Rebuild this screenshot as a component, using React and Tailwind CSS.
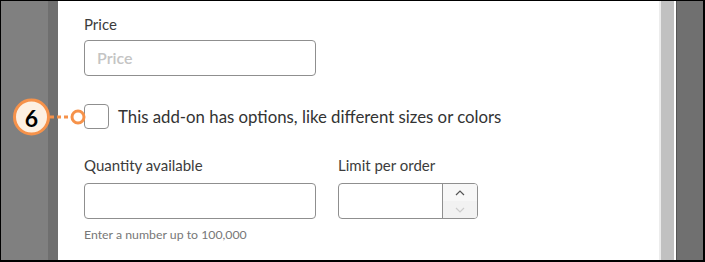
export default function App() {
  return (
    <div className="relative w-[705px] h-[262px] overflow-hidden border-t border-l border-b-2 border-r-2 border-black bg-white flex font-['Lato','Liberation_Sans',sans-serif] text-[#333]">
      <div className="w-[47px] shrink-0 bg-[#808080]" />
      <div className="w-[10px] shrink-0 bg-[#6f6f6f]" />

      <div className="flex-1 pl-[26px] pt-[14px]">
        <label className="block text-[15px] leading-[18px] text-[#3c3c3c]">Price</label>
        <div className="mt-[7px] w-[232px] h-[36px] rounded-[4px] border border-[#8f8f8f] flex items-center px-[12px] text-[16px] text-[#c4c4c4] font-semibold">
          Price
        </div>

        <div className="mt-[28px] flex items-center">
          <div className="w-[25px] h-[25px] rounded-[4px] border border-[#8f8f8f] bg-white" />
          <span className="ml-[9px] text-[16.8px] text-[#333]">This add-on has options, like different sizes or colors</span>
        </div>

        <div className="mt-[27px] flex gap-[22px]">
          <div>
            <label className="block text-[15px] leading-[18px] text-[#3c3c3c]">Quantity available</label>
            <div className="mt-[9px] w-[232px] h-[36px] rounded-[4px] border border-[#8f8f8f]" />
            <p className="mt-[7px] text-[12.3px] text-[#777]">Enter a number up to 100,000</p>
          </div>
          <div>
            <label className="block text-[15px] leading-[18px] text-[#3c3c3c]">Limit per order</label>
            <div className="mt-[9px] w-[140px] h-[36px] rounded-[4px] border border-[#8f8f8f] flex overflow-hidden">
              <div className="flex-1" />
              <div className="w-[35px] border-l border-[#8f8f8f] flex flex-col">
                <div className="flex-1 bg-[#f7f7f7] flex items-center justify-center">
                  <svg width="10" height="6" viewBox="0 0 10 6" fill="none">
                    <path d="M1 5l4-4 4 4" stroke="#555" strokeWidth="1.2" />
                  </svg>
                </div>
                <div className="flex-1 bg-[#f2f2f2] flex items-center justify-center">
                  <svg width="10" height="6" viewBox="0 0 10 6" fill="none">
                    <path d="M1 1l4 4 4-4" stroke="#ccc" strokeWidth="1.2" />
                  </svg>
                </div>
              </div>
            </div>
          </div>
        </div>
      </div>

      <div className="w-[2px] shrink-0 bg-[#ececec]" />
      <div className="w-[13px] shrink-0 bg-[#c1c1c1]" />
      <div className="w-[2px] shrink-0 bg-white" />
      <div className="w-[1px] shrink-0 bg-[#555]" />
      <div className="w-[26px] shrink-0 bg-[#707070]" />

      {/* annotation marker */}
      <svg className="absolute left-[10px] top-[97px]" width="80" height="38" viewBox="0 0 80 38" fill="none">
        <line x1="39" y1="19" x2="60" y2="19" stroke="#f6924a" strokeWidth="3" strokeDasharray="4 3" />
        <circle cx="67" cy="19" r="6" fill="#fff" stroke="#f6924a" strokeWidth="3" />
        <circle cx="20.5" cy="19" r="17" fill="#fdf0e2" stroke="#f6924a" strokeWidth="3" />
      </svg>
      <div className="absolute left-[13px] top-[100px] w-[35px] h-[35px] flex items-center justify-center text-[23px] font-bold text-black">6</div>
    </div>
  )
}
